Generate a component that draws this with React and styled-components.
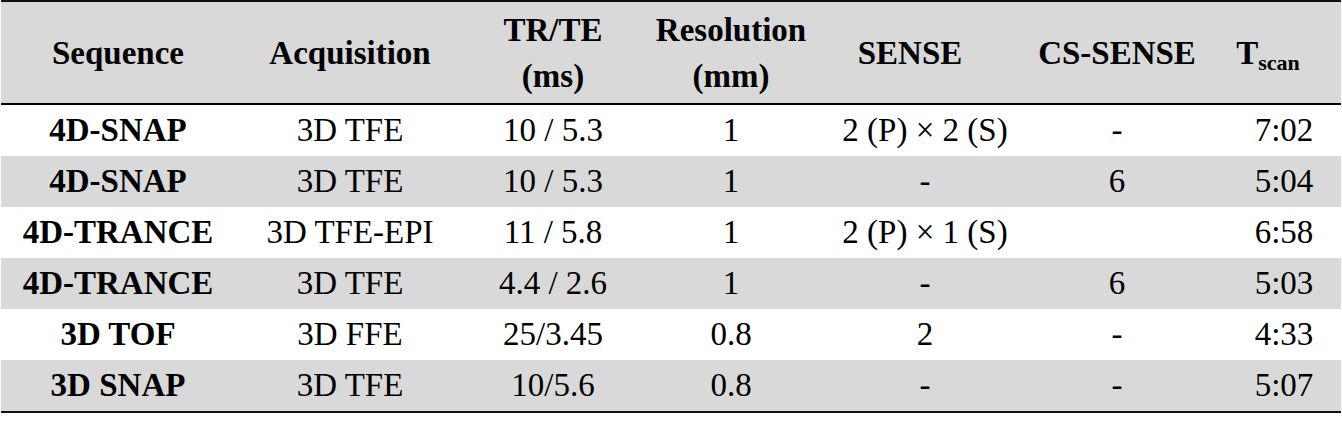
import React from "react";
import styled, { createGlobalStyle } from "styled-components";

const GlobalStyle = createGlobalStyle`
  html, body {
    margin: 0;
    padding: 0;
    background: #ffffff;
  }
  body {
    font-family: "Liberation Serif", "Times New Roman", serif;
    color: #000;
  }
`;

const columns = "234px 230px 176px 180px 208px 176px 1fr";

const Table = styled.div`
  width: 1340px;
  margin-left: 1px;
  border-top: 2px solid #111;
  border-bottom: 2px solid #111;
`;

const HeaderRow = styled.div`
  display: grid;
  grid-template-columns: ${columns};
  height: 101px;
  background: #d9d9d9;
  border-bottom: 2px solid #000;
`;

const HeadCell = styled.div`
  display: flex;
  align-items: center;
  justify-content: center;
  text-align: center;
  font-weight: bold;
  font-size: 33px;
  line-height: 46px;
  padding-right: ${(p) => p.$shift || 0}px;
`;

const Sub = styled.sub`
  font-size: 22px;
  vertical-align: -6px;
  line-height: 0;
`;

const Row = styled.div`
  display: grid;
  grid-template-columns: ${columns};
  height: 51px;
  background: ${(p) => (p.$shaded ? "#d9d9d9" : "#ffffff")};
`;

const Cell = styled.div`
  display: flex;
  align-items: center;
  justify-content: center;
  font-size: 33px;
  white-space: nowrap;
  font-weight: ${(p) => (p.$bold ? "bold" : "normal")};
  padding-left: ${(p) => p.$push || 0}px;
`;

const rows = [
  ["4D-SNAP", "3D TFE", "10 / 5.3", "1", "2 (P) × 2 (S)", "-", "7:02"],
  ["4D-SNAP", "3D TFE", "10 / 5.3", "1", "-", "6", "5:04"],
  ["4D-TRANCE", "3D TFE-EPI", "11 / 5.8", "1", "2 (P) × 1 (S)", "", "6:58"],
  ["4D-TRANCE", "3D TFE", "4.4 / 2.6", "1", "-", "6", "5:03"],
  ["3D TOF", "3D FFE", "25/3.45", "0.8", "2", "-", "4:33"],
  ["3D SNAP", "3D TFE", "10/5.6", "0.8", "-", "-", "5:07"],
];

export default function App() {
  return (
    <>
      <GlobalStyle />
      <Table>
        <HeaderRow>
          <HeadCell>Sequence</HeadCell>
          <HeadCell>Acquisition</HeadCell>
          <HeadCell>
            TR/TE
            <br />
            (ms)
          </HeadCell>
          <HeadCell>
            Resolution
            <br />
            (mm)
          </HeadCell>
          <HeadCell $shift={30}>SENSE</HeadCell>
          <HeadCell>CS-SENSE</HeadCell>
          <HeadCell $shift={10}>
            <span>
              T<Sub>scan</Sub>
            </span>
          </HeadCell>
        </HeaderRow>
        {rows.map((r, i) => (
          <Row key={i} $shaded={i % 2 === 1}>
            {r.map((v, j) => (
              <Cell key={j} $bold={j === 0} $push={j === 6 ? 22 : 0}>
                {v}
              </Cell>
            ))}
          </Row>
        ))}
      </Table>
    </>
  );
}
